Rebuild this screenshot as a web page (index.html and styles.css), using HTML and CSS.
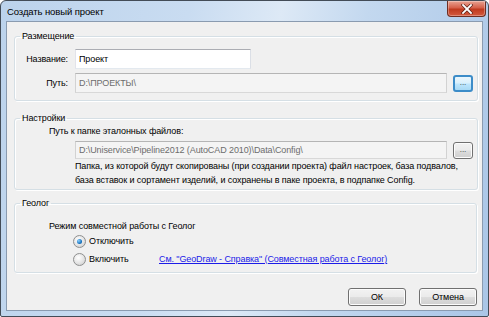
FILE: index.html
```html
<!DOCTYPE html>
<html lang="ru">
<head>
    <meta charset="UTF-8">
    <title>Создать новый проект</title>
    <link rel="stylesheet" href="styles.css">
</head>
<body>

<!-- Dialog Window -->
<div class="window">
    <div class="titlebar">
        <span class="title">Создать новый проект</span>
        <span class="close-btn">
            <svg width="12" height="10" viewBox="0 0 12 10">
                <path d="M2 1 L10 9 M10 1 L2 9" stroke="#5a2017" stroke-width="3.2" stroke-linecap="square"/>
                <path d="M2 1 L10 9 M10 1 L2 9" stroke="#ffffff" stroke-width="1.8" stroke-linecap="square"/>
            </svg>
        </span>
    </div>

    <div class="client">

        <!-- Размещение -->
        <fieldset class="group group-place">
            <legend>Размещение</legend>
            <div class="group-body">
                <div class="field-row">
                    <label class="field-label" for="name">Название:</label>
                    <input class="text-input name-input" id="name" value="Проект">
                </div>
                <div class="field-row">
                    <label class="field-label">Путь:</label>
                    <input class="text-input path-input" disabled value="D:\ПРОЕКТЫ\">
                    <button class="browse-btn focused">...</button>
                </div>
            </div>
        </fieldset>

        <!-- Настройки -->
        <fieldset class="group group-settings">
            <legend>Настройки</legend>
            <div class="group-body">
                <div class="caption">Путь к папке эталонных файлов:</div>
                <div class="field-row indent">
                    <input class="text-input path-input short" disabled value="D:\Uniservice\Pipeline2012 (AutoCAD 2010)\Data\Config\">
                    <button class="browse-btn">...</button>
                </div>
                <p class="hint">Папка, из которой будут скопированы (при создании проекта) файл настроек, база подвалов,<br>база вставок и сортамент изделий, и сохранены в паке проекта, в подпапке Config.</p>
            </div>
        </fieldset>

        <!-- Геолог -->
        <fieldset class="group group-geo">
            <legend>Геолог</legend>
            <div class="group-body">
                <div class="caption">Режим совместной работы с Геолог</div>
                <div class="radio-row">
                    <span class="radio checked"></span>
                    <span class="radio-text">Отключить</span>
                </div>
                <div class="radio-row">
                    <span class="radio"></span>
                    <span class="radio-text">Включить</span>
                    <a href="#" class="help-link">См. "GeoDraw - Справка" (Совместная работа с Геолог)</a>
                </div>
            </div>
        </fieldset>

        <!-- Buttons -->
        <div class="dialog-buttons">
            <button class="dialog-btn">ОК</button>
            <button class="dialog-btn">Отмена</button>
        </div>
    </div>
</div>

</body>
</html>
```

FILE: styles.css
```css
body {
    margin: 0;
    padding: 0;
    font-family: "Liberation Sans", Arial, sans-serif;
    font-size: 9px;
    letter-spacing: -0.1px;
    color: #000;
    background-color: #fff;
}

/* Window frame */
.window {
    width: 489px;
    height: 317px;
    box-sizing: border-box;
    border: 1px solid #434c57;
    border-radius: 6px 6px 2px 2px;
    padding: 0 5px 5px 5px;
    display: flex;
    flex-direction: column;
    background: linear-gradient(100deg, #bcd3ec 0%, #c9dcf1 35%, #dde9f6 52%, #c3d8ef 68%, #aac6e7 100%);
    overflow: hidden;
}

.titlebar {
    height: 20px;
    display: flex;
    justify-content: space-between;
    align-items: flex-start;
}

.title {
    font-size: 9.5px;
    margin-top: 5px;
    margin-left: 1px;
    color: #000;
}

.close-btn {
    width: 39px;
    height: 16px;
    box-sizing: border-box;
    margin-right: -3px;
    border: 1px solid #6e2d22;
    border-top: none;
    border-radius: 0 0 4px 4px;
    background: linear-gradient(#e8a393 0%, #d5604a 45%, #bf3a1f 55%, #d35a3f 100%);
    box-shadow: inset 0 0 0 1px rgba(255, 255, 255, 0.3);
    display: flex;
    align-items: center;
    justify-content: center;
}

.client {
    flex: 1;
    border: 1px solid #8a9bb0;
    background-color: #f0f0f0;
    padding: 0 5px 4px 7px;
    display: flex;
    flex-direction: column;
}

/* Group boxes */
.group {
    margin: 0;
    padding: 0;
    border: 1px solid #d5dfe5;
    border-radius: 3px;
    box-shadow: inset 1px 1px 0 #fff, 1px 1px 0 #fff;
}

.group legend {
    margin-left: 5px;
    padding: 0 2px;
    line-height: 12px;
}

.group-place {
    margin-top: 8px;
}

.group-settings {
    margin-top: 11px;
}

.group-geo {
    margin-top: 7px;
}

.group-place .group-body {
    padding: 7px 4px 7px 0;
}

.group-settings .group-body {
    padding: 1px 4px 2px 0;
}

.group-geo .group-body {
    padding: 11px 4px 4px 0;
}

.field-row {
    display: flex;
    align-items: center;
    gap: 6px;
}

.field-row + .field-row {
    margin-top: 4px;
}

.field-label {
    width: 53px;
    margin-right: 1px;
    text-align: right;
}

.indent {
    margin-left: 60px;
}

.caption {
    margin-left: 34px;
    line-height: 12px;
    margin-bottom: 4px;
}

.group-geo .caption {
    margin-bottom: 0;
}

.text-input {
    height: 20px;
    box-sizing: border-box;
    padding: 0 3px;
    font-family: inherit;
    font-size: 9px;
    letter-spacing: -0.1px;
    border: 1px solid #abadb3;
    border-color: #abadb3 #dbdfe6 #e3e9ef #e2e3ea;
    background-color: #fff;
    color: #000;
}

.name-input {
    width: 176px;
}

.path-input {
    width: 372px;
    background-color: #f4f4f4;
    border-color: #b5b5b5 #d2d2d2 #d8d8d8 #d2d2d2;
    color: #6d6d6d;
}

.path-input.short {
    height: 18px;
}

.browse-btn {
    width: 20px;
    height: 17px;
    padding: 0;
    font-family: inherit;
    font-size: 8px;
    line-height: 10px;
    color: #333;
    border: 1px solid #707070;
    border-radius: 3px;
    background: linear-gradient(#f2f2f2 0%, #ebebeb 48%, #dddddd 52%, #cfcfcf 100%);
    box-shadow: inset 0 0 0 1px #fcfcfc;
}

.browse-btn.focused {
    border: 2px solid #3c8cc8;
    background: linear-gradient(#eaf6fd 0%, #d9f0fc 48%, #bee6fd 52%, #a7d9f5 100%);
    box-shadow: none;
}

.hint {
    margin: 0 0 0 60px;
    line-height: 14px;
}

/* Radios */
.radio-row {
    display: flex;
    align-items: center;
    height: 18px;
    margin-left: 58px;
}

.radio {
    width: 11px;
    height: 11px;
    border: 1px solid #8e8f8f;
    border-radius: 50%;
    background: radial-gradient(circle at 40% 35%, #ffffff 0%, #e6e6e6 50%, #c7c7c7 100%);
    position: relative;
}

.radio.checked::after {
    content: "";
    position: absolute;
    left: 3px;
    top: 3px;
    width: 5px;
    height: 5px;
    border-radius: 50%;
    background: radial-gradient(circle at 35% 35%, #8fd2ff 0%, #1a75c0 60%, #0c4c8c 100%);
}

.radio-text {
    margin-left: 3px;
    width: 70px;
}

.help-link {
    color: #1c1ce8;
    text-decoration: underline;
}

/* Dialog buttons */
.dialog-buttons {
    margin-top: auto;
    display: flex;
    justify-content: flex-end;
    gap: 13px;
}

.dialog-btn {
    width: 58px;
    height: 18px;
    padding: 0;
    font-family: inherit;
    font-size: 9px;
    letter-spacing: -0.1px;
    color: #000;
    border: 1px solid #707070;
    border-radius: 3px;
    background: linear-gradient(#f2f2f2 0%, #ebebeb 48%, #dddddd 52%, #cfcfcf 100%);
    box-shadow: inset 0 0 0 1px #fcfcfc;
}
```
